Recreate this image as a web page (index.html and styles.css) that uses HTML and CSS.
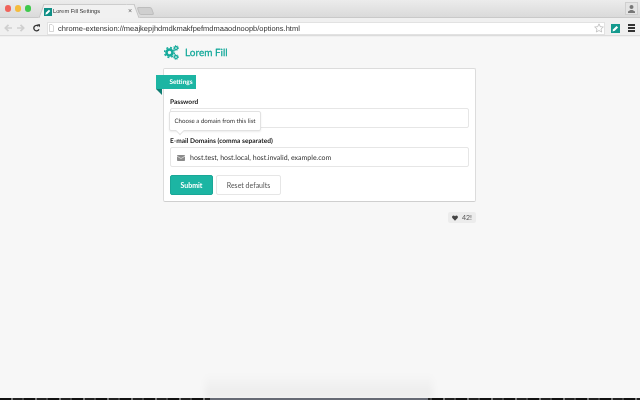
FILE: index.html
```html
<!DOCTYPE html>
<html lang="en">
<head>
<meta charset="utf-8">
<title>Lorem Fill Settings</title>
<link rel="stylesheet" href="styles.css">
</head>
<body>
<div class="chrome">
  <div class="tabstrip">
    <div class="lights"><span class="light red"></span><span class="light yellow"></span><span class="light green"></span></div>
    <div class="tab">
      <svg class="favicon" viewBox="0 0 9 9"><rect width="9" height="9" fill="#0f8f86"/><path d="M1.500 7.500l.7-2.300 3.300-3.300 1.600 1.600-3.300 3.300z" fill="#fff"/></svg>
      <span class="tab-title">Lorem Fill Settings</span>
      <span class="tab-close">×</span>
    </div>
    <div class="newtab"></div>
    <div class="profile"><svg width="7" height="8" viewBox="0 0 7 8"><circle cx="3.500" cy="2" r="2" fill="#777"/><path d="M0 8V6.500L2.500 5h2L7 6.500V8z" fill="#777"/></svg></div>
  </div>
  <div class="toolbar">
    <svg class="nav back" viewBox="0 0 8 8"><path d="M8 4H2M4.500 .8L1.300 4l3.200 3.200" fill="none" stroke="#cfcfcf" stroke-width="1.700"/></svg>
    <svg class="nav forward" viewBox="0 0 8 8"><path d="M0 4h6M3.500 .8L6.700 4 3.500 7.200" fill="none" stroke="#cfcfcf" stroke-width="1.700"/></svg>
    <svg class="nav reload" viewBox="0 0 7 8"><path d="M6 5.200A2.700 2.700 0 1 1 5.400 2.200" fill="none" stroke="#333" stroke-width="1.300"/><path d="M4 .3h3v3z" fill="#333"/></svg>
    <div class="omnibox">
      <svg class="page-icon" viewBox="0 0 5 8"><path d="M.5.5h2.500l1.500 1.500v5.500h-4z" fill="#fff" stroke="#c4c4c4" stroke-width=".7"/></svg>
      <span class="url">chrome-extension://meajkepjhdmdkmakfpefmdmaaodnoopb/options.html</span>
      <svg class="star" viewBox="0 0 12 12"><path d="M6 1l1.500 3.400 3.700.4-2.800 2.400.8 3.600L6 9l-3.200 1.800.8-3.600L.8 4.800l3.700-.4z" fill="#fff" stroke="#b5b5b5" stroke-width=".9"/></svg>
    </div>
    <svg class="ext" viewBox="0 0 9 9"><rect width="9" height="9" fill="#149a8e"/><path d="M1.500 7.500l.7-2.300 3.300-3.300 1.600 1.600-3.300 3.300z" fill="#fff"/></svg>
    <div class="menu"><span></span><span></span><span></span></div>
  </div>
</div>

<main class="page">
  <header class="brand">
    <svg class="gears" viewBox="0 0 15 15"><g fill="none" stroke="#16ab9c"><circle cx="5.500" cy="7.500" r="3" stroke-width="2.600"/><circle cx="5.500" cy="7.500" r="4.900" stroke-width="1.600" stroke-dasharray="1.900 1.950"/><circle cx="12" cy="3" r="1.500" stroke-width="1.300"/><circle cx="12" cy="3" r="2.500" stroke-width="1" stroke-dasharray="1 1.100"/><circle cx="12" cy="12" r="1.500" stroke-width="1.300"/><circle cx="12" cy="12" r="2.500" stroke-width="1" stroke-dasharray="1 1.100"/></g></svg>
    <h1 class="brand-name">Lorem Fill</h1>
  </header>
  <section class="card">
    <div class="ribbon">Settings</div>
    <form class="form">
      <label class="label">Password</label>
      <div class="field tooltip-anchor">
        <div class="tooltip">Choose a domain from this list</div>
      </div>
      <label class="label domains">E-mail Domains (comma separated)</label>
      <div class="field">
        <svg class="mail" width="8" height="6" viewBox="0 0 8 6"><rect width="8" height="6" rx=".8" fill="#8b8b8b"/><path d="M0 1.200l4 2.300 4-2.300" fill="none" stroke="#fff" stroke-width=".6"/></svg>
        <span class="value">host.test, host.local, host.invalid, example.com</span>
      </div>
      <div class="actions">
        <button type="button" class="btn primary">Submit</button>
        <button type="button" class="btn secondary">Reset defaults</button>
      </div>
    </form>
  </section>
  <div class="likes-row">
    <div class="likes">
      <svg width="6" height="6" viewBox="0 0 8 7"><path d="M4 7L.5 3.500C-.5 2 .5 0 2 0c1 0 1.600.5 2 1 .4-.5 1-1 2-1 1.500 0 2.500 2 1.500 3.500z" fill="#444"/></svg>
      <span>42!</span>
    </div>
  </div>
</main>
<div class="dock-shadow"></div>
<div class="screen-edge"><div class="dock"></div></div>
</body>
</html>
```
FILE: styles.css
```css
* { box-sizing: border-box; }
html, body { margin: 0; height: 400px; overflow: hidden; }
body { position: relative; background: #f7f7f7; font-family: Lato, sans-serif; color: #333; display: flex; flex-direction: column; text-rendering: geometricPrecision; }
.chrome { flex: none; height: 37px; background: #f0f0f0; font-family: "Liberation Sans", sans-serif; will-change: transform; }
.tabstrip { height: 18px; display: flex; background: linear-gradient(#ececec, #dadada); border-bottom: 1px solid #c9c9c9; }
.lights { flex: none; display: flex; gap: 3.500px; padding: 5px 0 0 4.500px; width: 44px; }
.light { width: 6.500px; height: 6.500px; border-radius: 50%; }
.red { background: #f0635a; } .yellow { background: #f5bb3c; } .green { background: #3ec84c; }
.tab { position: relative; flex: none; width: 90px; height: 14px; margin-top: 4px; background: #f1f1f1; border-top: 1px solid #cdcdcd; display: flex; align-items: center; }
.tab::before, .tab::after { content: ""; position: absolute; top: -1px; bottom: 0; width: 7px; background: #f1f1f1; border-top: 1px solid #cdcdcd; }
.tab::before { left: -3px; transform: skewX(-20deg); border-left: 1px solid #c4c4c4; }
.tab::after { right: -3px; transform: skewX(20deg); border-right: 1px solid #c4c4c4; }
.favicon { position: relative; z-index: 1; flex: none; width: 8px; height: 8px; margin-right: 1px; }
.tab-title { position: relative; z-index: 1; font-size: 5.700px; color: #333; flex: 1; white-space: nowrap; }
.tab-close { position: relative; z-index: 1; font-size: 7px; color: #666; margin-right: 2px; }
.newtab { flex: none; width: 15px; height: 8px; margin: 7px 0 0 4px; background: #cfcfcf; border: 1px solid #bdbdbd; border-radius: 2px; transform: skewX(20deg); }
.profile { margin-left: auto; margin-right: 2px; margin-top: 2px; width: 13px; height: 13px; background: #e4e4e4; border: 1px solid #cfcfcf; display: flex; align-items: center; justify-content: center; }
.toolbar { height: 18px; display: flex; align-items: center; padding: 3px 5px 0 4px; background: #f0f0f0; border-bottom: 1px solid #dcdcdc; }
.nav { flex: none; height: 8px; }
.back { width: 8px; margin-right: 5px; }
.forward { width: 8px; margin-right: 8px; }
.reload { width: 7px; margin-right: 7px; }
.omnibox { flex: 1; height: 13px; background: #fff; border: 1px solid #e2e2e2; display: flex; align-items: center; padding: 0 0 0 1px; }
.page-icon { flex: none; width: 5px; height: 8px; margin-right: 4px; }
.url { font-size: 7.500px; color: #333; flex: 1; white-space: nowrap; }
.star { flex: none; width: 10px; height: 10px; }
.ext { flex: none; margin-left: 6px; margin-right: 8px; width: 9px; height: 9px; }
.menu { flex: none; width: 7px; display: flex; flex-direction: column; gap: 1.500px; }
.menu span { height: 1.500px; background: #333; }
.page { flex: 1; width: 313px; margin-left: 163px; will-change: transform; }
.brand { display: flex; align-items: center; gap: 6px; height: 31px; padding: 0 1px; }
.gears { flex: none; width: 15px; height: 15px; }
.brand-name { margin: 0; font-size: 10px; font-weight: 400; color: #12a899; -webkit-text-stroke: .25px #12a899; }
.card { position: relative; height: 134px; background: #fff; border: 1px solid #dcdcdc; border-bottom-color: #cfcfcf; border-radius: 2px; }
.ribbon { position: absolute; left: -8px; top: 6px; width: 40px; height: 14px; background: #1cb5a3; color: #fff; font-size: 6.500px; font-weight: 700; display: flex; align-items: center; justify-content: center; padding-left: 10px; }
.ribbon::after { content: ""; position: absolute; left: 0; top: 14px; border-top: 6px solid #0f7d72; border-left: 6px solid transparent; }
.form { padding: 28.500px 6px 0; }
.label { display: block; font-size: 6.600px; font-weight: 700; color: #222; line-height: 9px; }
.field { position: relative; margin-top: 1.500px; height: 20px; background: #fff; border: 1px solid #e6e6e6; border-radius: 2px; display: flex; align-items: center; padding: 1px 0 0 6px; }
.domains { margin-top: 8.500px; }
.tooltip { position: absolute; left: -2px; top: 2px; width: 92px; height: 20px; background: #fff; border: 1px solid #e2e2e2; border-radius: 2px; font-size: 6.100px; color: #333; display: flex; align-items: center; justify-content: center; white-space: nowrap; box-shadow: 0 1px 2px rgba(0,0,0,.08); }
.tooltip::after { content: ""; position: absolute; left: 7px; top: 16px; width: 5px; height: 5px; background: #fff; transform: rotate(45deg); border-right: 1px solid #e2e2e2; border-bottom: 1px solid #e2e2e2; }
.mail { flex: none; margin-right: 5px; }
.value { font-size: 7px; color: #333; }
.actions { display: flex; gap: 3px; margin-top: 8px; }
.btn { height: 20px; border-radius: 2px; font-family: Lato, sans-serif; font-size: 7px; padding: 0; }
.primary { width: 43px; background: #1cb5a3; border: 1px solid #1aa797; color: #fff; font-weight: 700; font-size: 7px; }
.secondary { width: 65px; background: #fff; border: 1px solid #e6e6e6; color: #555; }
.likes-row { display: flex; justify-content: flex-end; margin-top: 10px; }
.likes { width: 28px; height: 11px; background: #ececec; border-radius: 2px; display: flex; align-items: center; justify-content: center; gap: 4px; font-size: 7px; color: #555; }
.dock-shadow { position: absolute; left: 205px; width: 228px; bottom: 2px; height: 24px; background: linear-gradient(rgba(0,0,0,0), rgba(0,0,0,.05)); filter: blur(3px); }
.screen-edge { position: absolute; left: 0; right: 0; bottom: 0; height: 2px; background: repeating-linear-gradient(90deg, #111 0 11px, #777 11px 13px, #222 13px 22px, #444 22px 24px); }
.dock { width: 218px; height: 2px; margin-left: 210px; background: #666a74; }
```
